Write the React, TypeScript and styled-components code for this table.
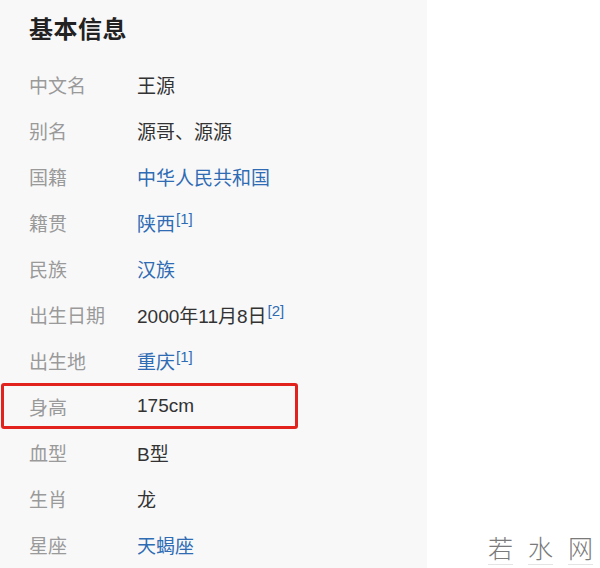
import styled, { createGlobalStyle } from "styled-components";

const GlobalStyle = createGlobalStyle`
    body {
        margin: 0;
        background: #fff;
        font-family: "Liberation Sans", "Noto Sans CJK SC", sans-serif;
    }
`;

interface InfoItem {
    label: string;
    value: string;
    link?: boolean;
    cite?: number;
    highlight?: boolean;
}

const items: InfoItem[] = [
    { label: "中文名", value: "王源" },
    { label: "别名", value: "源哥、源源" },
    { label: "国籍", value: "中华人民共和国", link: true },
    { label: "籍贯", value: "陕西", link: true, cite: 1 },
    { label: "民族", value: "汉族", link: true },
    { label: "出生日期", value: "2000年11月8日", cite: 2 },
    { label: "出生地", value: "重庆", link: true, cite: 1 },
    { label: "身高", value: "175cm", highlight: true },
    { label: "血型", value: "B型" },
    { label: "生肖", value: "龙" },
    { label: "星座", value: "天蝎座", link: true },
];

export default function App() {
    return (
        <Page>
            <GlobalStyle />
            <Panel>
                <Title>基本信息</Title>
                {items.map((item) => (
                    <Row key={item.label} $highlight={item.highlight}>
                        <Label>{item.label}</Label>
                        <Value $link={item.link}>
                            {item.value}
                            {item.cite && <Cite>[{item.cite}]</Cite>}
                        </Value>
                    </Row>
                ))}
            </Panel>
            <Watermark>
                <span>若</span>
                <span>水</span>
                <span>网</span>
            </Watermark>
        </Page>
    );
}

const Page = styled.div`
    position: relative;
    width: 600px;
    height: 568px;
    display: flex;
    background: #fff;
    overflow: hidden;
`;

const Panel = styled.div`
    width: 427px;
    height: 100%;
    box-sizing: border-box;
    padding: 16px 0 0 29px;
    background: #f8f8f9;
`;

const Title = styled.h2`
    margin: 0 0 17px;
    font-size: 24px;
    line-height: 28px;
    font-weight: 700;
    color: #222;
    letter-spacing: 0.5px;
`;

const Row = styled.div<{ $highlight?: boolean }>`
    display: flex;
    align-items: center;
    height: 46px;
    box-sizing: border-box;
    ${({ $highlight }) =>
        $highlight &&
        `
        width: 297px;
        margin-left: -28px;
        padding-left: 25px;
        border: 3px solid #e2231d;
        border-radius: 3px;
    `}
`;

const Label = styled.span`
    width: 108px;
    flex-shrink: 0;
    font-size: 19px;
    color: #9a9a9a;
`;

const Value = styled.span<{ $link?: boolean }>`
    font-size: 19px;
    color: ${({ $link }) => ($link ? "#2f6cb3" : "#333")};
    white-space: nowrap;
`;

const Cite = styled.sup`
    font-size: 15px;
    color: #2f6cb3;
    margin-left: 1px;
    vertical-align: 7px;
    line-height: 0;
`;

const Watermark = styled.div`
    position: absolute;
    left: 488px;
    top: 530px;
    display: flex;
    gap: 15px;
    font-family: "Noto Sans CJK SC", sans-serif;
    font-size: 25px;
    font-weight: 300;
    color: #7a7a7a;

    span {
        width: 25px;
        line-height: 34px;
        border-bottom: 1px solid #e4e4e4;
    }
`;
